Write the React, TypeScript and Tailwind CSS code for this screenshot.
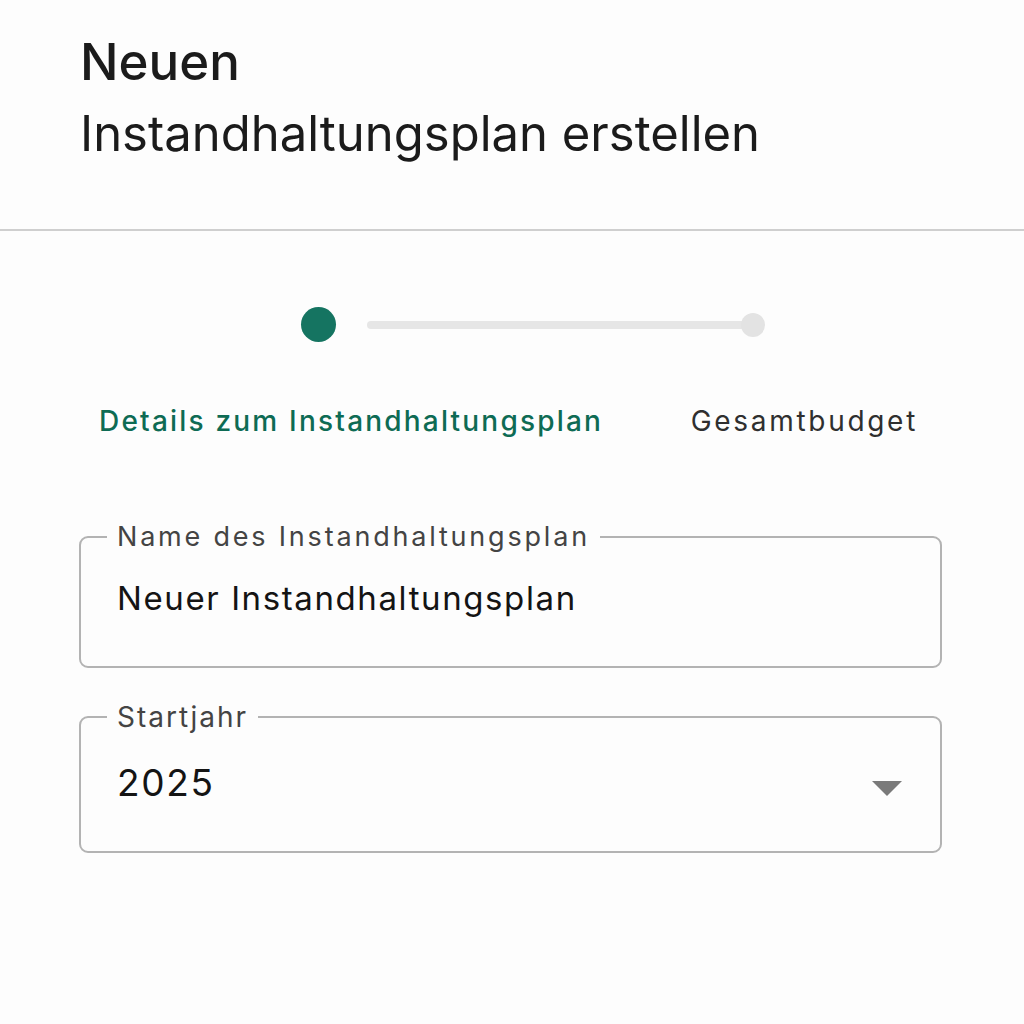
export default function App() {
  return (
    <div className="min-h-screen w-full bg-[#fdfdfd] text-[#1b1b1b]" style={{ fontFamily: "Inter, 'Noto Sans', sans-serif" }}>
      {/* HEADER */}
      <div className="px-20 pt-[32px] pb-[65px] border-b-2 border-[#cfcfcf]">
        <h1 className="text-[51px] leading-[60px] font-medium">Neuen</h1>
        <p className="mt-[12px] text-[49px] leading-[60px]">Instandhaltungsplan erstellen</p>
      </div>

      {/* STEPPER */}
      <div className="mt-[76px] flex items-center pl-[301px]">
        <div className="w-[35px] h-[35px] rounded-full bg-[#157461]" />
        <div className="ml-[31px] w-[386px] h-[8px] rounded-full bg-[#e6e6e6]" />
        <div className="-ml-[12px] w-[24px] h-[24px] rounded-full bg-[#e3e3e3]" />
      </div>

      <div className="mt-[58px] flex items-center">
        <span className="ml-[99px] text-[28px] tracking-[2.2px] font-medium text-[#0e6b54]">Details zum Instandhaltungsplan</span>
        <span className="ml-auto mr-[106px] text-[28px] tracking-[2.7px] text-[#2f2f2f]">Gesamtbudget</span>
      </div>

      {/* FORM */}
      <div className="ml-[79px] mr-[82px] mt-[95px] flex flex-col gap-[34px]">
        <fieldset className="h-[146px] rounded-[9px] border-2 border-[#b3b3b3] px-[36px] -mt-[15px]">
          <legend className="-ml-[10px] px-[10px] text-[27px] tracking-[2.8px] leading-[30px] text-[#444]">Name des Instandhaltungsplan</legend>
          <div className="mt-[22px] text-[33px] tracking-[1.6px] text-[#141414]">Neuer Instandhaltungsplan</div>
        </fieldset>

        <fieldset className="h-[151px] rounded-[9px] border-2 border-[#b3b3b3] px-[36px]">
          <legend className="-ml-[10px] px-[10px] text-[28px] tracking-[2px] leading-[30px] text-[#444]">Startjahr</legend>
          <div className="mt-[23px] flex items-center">
            <span className="text-[37px] tracking-[1.7px] text-[#141414]">2025</span>
            <svg className="ml-auto mr-[2px] mt-[12px]" width="30" height="16" viewBox="0 0 30 16">
              <path d="M0 0 L30 0 L15 15 Z" fill="#7a7a7a" />
            </svg>
          </div>
        </fieldset>
      </div>
    </div>
  )
}
